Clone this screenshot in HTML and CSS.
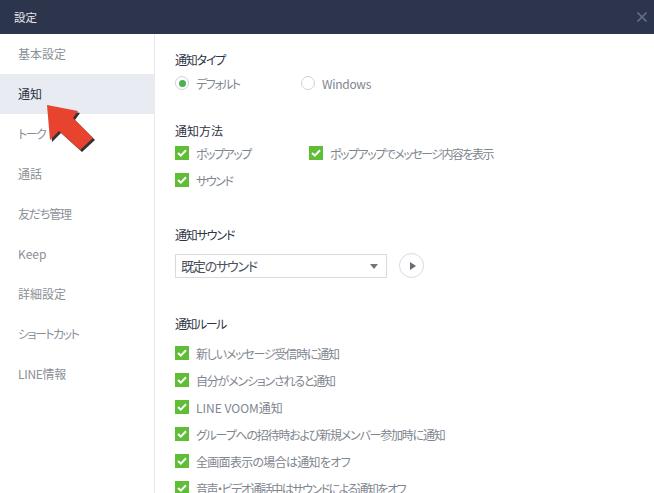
FILE: index.html
```html
<!DOCTYPE html>
<html lang="ja">
<head>
    <meta charset="UTF-8">
    <meta name="viewport" content="width=device-width, initial-scale=1.0">
    <title>設定</title>
    <link rel="stylesheet" href="styles.css">
</head>
<body>

    <header class="title-bar">
        <span class="title">設定</span>
        <svg class="close-icon" width="10" height="10" viewBox="0 0 10 10">
            <path d="M0.5 0.5 L9.5 9.5 M9.5 0.5 L0.5 9.5" stroke="#5f6b85" stroke-width="1.8" fill="none"/>
        </svg>
    </header>

    <div class="content">
        <nav class="sidebar">
            <a class="nav-item">基本設定</a>
            <a class="nav-item active">通知</a>
            <a class="nav-item tight-l">トーク</a>
            <a class="nav-item">通話</a>
            <a class="nav-item tight">友だち管理</a>
            <a class="nav-item">Keep</a>
            <a class="nav-item">詳細設定</a>
            <a class="nav-item tight-l">ショートカット</a>
            <a class="nav-item tight-xs">LINE情報</a>
        </nav>

        <main class="settings">
            <section class="group group-type">
                <h3 class="tight">通知タイプ</h3>
                <div class="option-row">
                    <label class="option col-type tight-l"><span class="radio checked"></span>デフォルト</label>
                    <label class="option tight-xs"><span class="radio"></span>Windows</label>
                </div>
            </section>

            <section class="group group-method">
                <h3>通知方法</h3>
                <div class="option-list">
                    <div class="option-row">
                        <label class="option col-method tight-l"><span class="check"><svg width="10" height="8" viewBox="0 0 10 8"><path d="M1 4 L3.8 6.6 L9 1.2" stroke="#fff" stroke-width="2" fill="none"/></svg></span>ポップアップ</label>
                        <label class="option tight-l"><span class="check"><svg width="10" height="8" viewBox="0 0 10 8"><path d="M1 4 L3.8 6.6 L9 1.2" stroke="#fff" stroke-width="2" fill="none"/></svg></span>ポップアップでメッセージ内容を表示</label>
                    </div>
                    <label class="option tight-l"><span class="check"><svg width="10" height="8" viewBox="0 0 10 8"><path d="M1 4 L3.8 6.6 L9 1.2" stroke="#fff" stroke-width="2" fill="none"/></svg></span>サウンド</label>
                </div>
            </section>

            <section class="group group-sound">
                <h3 class="tight">通知サウンド</h3>
                <div class="sound-row">
                    <div class="select tight">既定のサウンド<span class="select-arrow"></span></div>
                    <button class="play-btn"><span class="play-icon"></span></button>
                </div>
            </section>

            <section class="group group-rule">
                <h3 class="tight-l">通知ルール</h3>
                <div class="option-list">
                    <label class="option tight"><span class="check"><svg width="10" height="8" viewBox="0 0 10 8"><path d="M1 4 L3.8 6.6 L9 1.2" stroke="#fff" stroke-width="2" fill="none"/></svg></span>新しいメッセージ受信時に通知</label>
                    <label class="option tight"><span class="check"><svg width="10" height="8" viewBox="0 0 10 8"><path d="M1 4 L3.8 6.6 L9 1.2" stroke="#fff" stroke-width="2" fill="none"/></svg></span>自分がメンションされると通知</label>
                    <label class="option"><span class="check"><svg width="10" height="8" viewBox="0 0 10 8"><path d="M1 4 L3.8 6.6 L9 1.2" stroke="#fff" stroke-width="2" fill="none"/></svg></span>LINE VOOM通知</label>
                    <label class="option tight"><span class="check"><svg width="10" height="8" viewBox="0 0 10 8"><path d="M1 4 L3.8 6.6 L9 1.2" stroke="#fff" stroke-width="2" fill="none"/></svg></span>グループへの招待時および新規メンバー参加時に通知</label>
                    <label class="option tight-s"><span class="check"><svg width="10" height="8" viewBox="0 0 10 8"><path d="M1 4 L3.8 6.6 L9 1.2" stroke="#fff" stroke-width="2" fill="none"/></svg></span>全画面表示の場合は通知をオフ</label>
                    <label class="option tight-l"><span class="check"><svg width="10" height="8" viewBox="0 0 10 8"><path d="M1 4 L3.8 6.6 L9 1.2" stroke="#fff" stroke-width="2" fill="none"/></svg></span>音声・ビデオ通話中はサウンドによる通知をオフ</label>
                </div>
            </section>
        </main>
    </div>

    <!-- red annotation arrow on top of the screenshot -->
    <svg class="annotation" width="60" height="60" viewBox="0 0 60 60">
        <path d="M2 2 L33 8 L28 15 L48 35 L35 47 L14 28 L5 37 Z" transform="translate(2 2)" fill="#333"/>
        <path d="M2 2 L33 8 L28 15 L48 35 L35 47 L14 28 L5 37 Z" fill="#e8432f"/>
    </svg>

</body>
</html>
```

FILE: styles.css
```css
* {
    box-sizing: border-box;
    margin: 0;
    padding: 0;
}

html, body {
    height: 100%;
    overflow: hidden;
}

body {
    position: relative;
    background: #fff;
    color: #80868f;
    font-family: "Noto Sans CJK JP", "Noto Sans", sans-serif;
    font-size: 12px;
    font-feature-settings: "palt";
    display: flex;
    flex-direction: column;
}

/* the original UI font has narrower kana than Noto */
.tight-xs { letter-spacing: -0.3px; }
.tight-s { letter-spacing: -0.7px; }
.tight { letter-spacing: -1.2px; }
.tight-l { letter-spacing: -1.5px; }

.title-bar {
    height: 34px;
    flex: none;
    background: #2c354b;
    color: #e6e8ee;
    display: flex;
    align-items: center;
    justify-content: space-between;
    padding: 0 8px 0 14px;
}

.title {
    font-size: 11.5px;
}

.content {
    flex: 1;
    display: flex;
    min-height: 0;
}

.sidebar {
    width: 155px;
    flex: none;
    border-right: 1px solid #e8eaee;
}

.nav-item {
    display: block;
    height: 40px;
    line-height: 40px;
    padding-left: 18px;
    color: #8b9098;
}

.nav-item.active {
    background: #e8ebf2;
    color: #2b3040;
}

.settings {
    flex: 1;
    padding: 16px 0 0 20px;
    overflow: hidden;
}

h3 {
    font-size: 12px;
    font-weight: 400;
    color: #2e3444;
    height: 20px;
    line-height: 20px;
}

.group-method { margin-top: 28px; }
.group-sound { margin-top: 35px; }
.group-rule { margin-top: 36px; }

.group-type .option-row { margin-top: 3px; }
.group-method .option-list { margin-top: 2px; }
.group-rule .option-list { margin-top: 9px; }

.option-row {
    display: flex;
}

.option-list {
    display: flex;
    flex-direction: column;
    gap: 7px;
}

.option {
    display: flex;
    align-items: center;
    height: 20px;
    white-space: nowrap;
}

.col-type { width: 126px; }
.col-method { width: 134px; }

.radio {
    width: 14px;
    height: 14px;
    margin-right: 7px;
    border-radius: 50%;
    border: 1px solid #cfd2d6;
    display: flex;
    align-items: center;
    justify-content: center;
}

.radio.checked::before {
    content: "";
    width: 7px;
    height: 7px;
    border-radius: 50%;
    background: #4caf50;
}

.check {
    width: 14px;
    height: 14px;
    margin-right: 7px;
    background: #5fbe35;
    display: flex;
    align-items: center;
    justify-content: center;
}

.sound-row {
    display: flex;
    align-items: center;
    margin-top: 8px;
}

.select {
    position: relative;
    width: 212px;
    height: 24px;
    line-height: 22px;
    padding-left: 5px;
    border: 1px solid #d8dade;
    color: #4a4f5a;
    font-size: 13px;
}

.select-arrow {
    position: absolute;
    right: 8px;
    top: 9px;
    border-left: 4px solid transparent;
    border-right: 4px solid transparent;
    border-top: 5px solid #71757d;
}

.play-btn {
    width: 25px;
    height: 25px;
    margin-left: 12px;
    background: #fff;
    border: 1px solid #d8dade;
    border-radius: 50%;
    display: flex;
    align-items: center;
    justify-content: center;
}

.play-icon {
    margin-left: 2px;
    border-top: 4px solid transparent;
    border-bottom: 4px solid transparent;
    border-left: 6px solid #666b75;
}

.close-icon {
    margin-right: -1px;
}

.annotation {
    position: absolute;
    left: 45px;
    top: 103px;
}
```
